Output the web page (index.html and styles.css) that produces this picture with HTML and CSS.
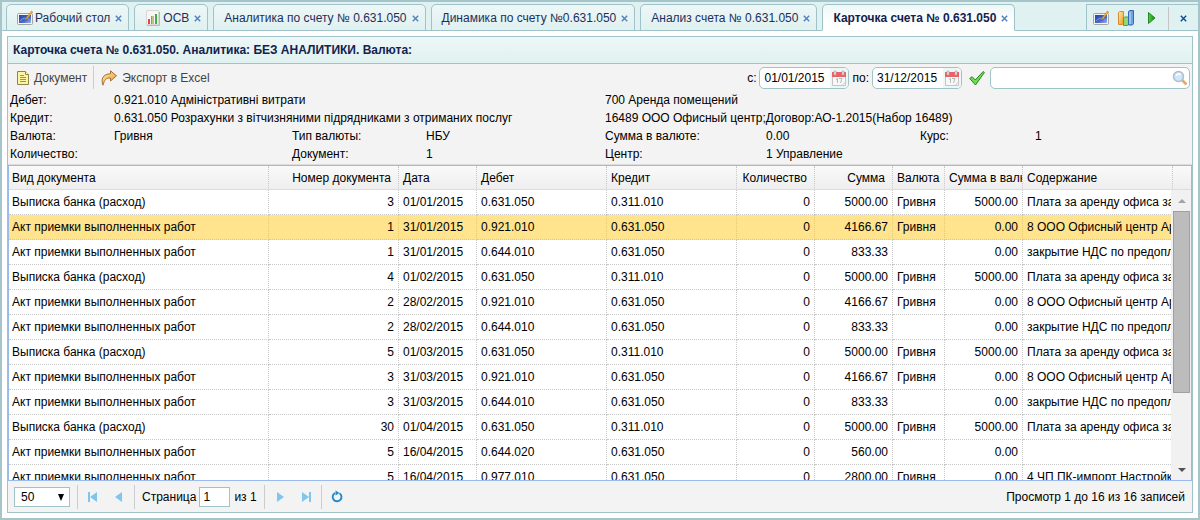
FILE: index.html
```html
<!DOCTYPE html>
<html lang="ru">
<head>
<meta charset="utf-8">
<title>Карточка счета № 0.631.050</title>
<link rel="stylesheet" href="styles.css">
</head>
<body>
<svg class="defs" aria-hidden="true">
  <defs>
    <linearGradient id="screen" x1="0" y1="0" x2="1" y2="1"><stop offset="0" stop-color="#2444a4"/><stop offset="0.6" stop-color="#4a68c4"/><stop offset="1" stop-color="#a4b8f0"/></linearGradient>
    <linearGradient id="green" x1="0" y1="0" x2="1" y2="0"><stop offset="0" stop-color="#5ccc50"/><stop offset="1" stop-color="#128a12"/></linearGradient>
    <linearGradient id="orange" x1="0" y1="0" x2="1" y2="1"><stop offset="0" stop-color="#fff0a0"/><stop offset="1" stop-color="#f0922c"/></linearGradient>
    <symbol id="desk" viewBox="0 0 16 16"><rect x="0.5" y="3.5" width="15" height="11" rx="1" fill="#f4f4f4" stroke="#a4a4a4"/><rect x="2" y="5" width="12" height="8" fill="url(#screen)"/><path d="M3 11q4-5 10-1" stroke="#7c98e4" fill="none"/><path d="M8.500 9.500l1-2L14.500 1l1.200 1-5.400 6.600z" fill="#f8bc44" stroke="#b87820" stroke-width=".6"/></symbol>
    <symbol id="close" viewBox="0 0 7 7"><path d="M.8.800l5.400 5.400M6.200.800L.8 6.200" stroke="currentColor" stroke-width="1.400"/></symbol>
    <symbol id="cal" viewBox="0 0 16 16"><path d="M1.500 4.500h13v11h-13z" fill="#f8f8f8" stroke="#c8c4c4"/><path d="M1 2h14v5H1z" fill="#e86464"/><path d="M3 1h2v4H3zM11 1h2v4h-2z" fill="#f0e4e4" stroke="#b89c9c" stroke-width=".6"/><path d="M5 9.500l1.500-1V13M8 8.500h3L9.500 13" fill="none" stroke="#b8b8b8"/><path d="M11 15.500l4-4" stroke="#ccc"/></symbol>
  </defs>
</svg>
<div class="window">
  <nav class="tabbar">
    <div class="tab"><svg class="icon"><use href="#desk"/></svg><a href="#">Рабочий стол</a><button class="tab-close" aria-label="Закрыть"><svg><use href="#close"/></svg></button></div>
    <div class="tab"><svg class="icon" viewBox="0 0 16 16"><path d="M1.500.500h12v14h-12z" fill="#f6f6f6" stroke="#d8d8d8"/><path d="M2 15.500h12.500V2" fill="none" stroke="#b8b8b8"/><path d="M3 9h2v5H3z" fill="#e84838"/><path d="M6 6h1.500v8H6z" fill="#38b4d8"/><path d="M7.500 6H9v8H7.500z" fill="#f0b434"/><path d="M10 4h2v10h-2z" fill="#34b83c"/></svg><a href="#">ОСВ</a><button class="tab-close" aria-label="Закрыть"><svg><use href="#close"/></svg></button></div>
    <div class="tab"><a href="#">Аналитика по счету № 0.631.050</a><button class="tab-close" aria-label="Закрыть"><svg><use href="#close"/></svg></button></div>
    <div class="tab"><a href="#">Динамика по счету №0.631.050</a><button class="tab-close" aria-label="Закрыть"><svg><use href="#close"/></svg></button></div>
    <div class="tab"><a href="#">Анализ счета № 0.631.050</a><button class="tab-close" aria-label="Закрыть"><svg><use href="#close"/></svg></button></div>
    <div class="tab active"><a href="#">Карточка счета № 0.631.050</a><button class="tab-close" aria-label="Закрыть"><svg><use href="#close"/></svg></button></div>
    <div class="tools">
      <button aria-label="Рабочий стол"><svg class="icon"><use href="#desk"/></svg></button>
      <button aria-label="Отчеты"><svg class="icon" viewBox="0 0 16 16"><path d="M.5 2.500l1-1h4v12l-1 1h-4z" fill="url(#orange)" stroke="#d88c30"/><path d="M5.500 8l1-1h4v7l-1 1.500h-4z" fill="#8cdc70" stroke="#48a438"/><path d="M10.500 1.500l1-1h4v13l-1 1.500h-4z" fill="#6ca4e8" stroke="#3468b0"/><path d="M12 2v12" stroke="#c8e0fc"/></svg></button>
      <button aria-label="Запуск"><svg class="icon" viewBox="0 0 16 16"><path d="M5.500 2.500v11L12 8z" fill="url(#green)" stroke="#1c8c1c"/></svg></button>
      <button class="close-all" aria-label="Закрыть все"><svg><use href="#close"/></svg></button>
    </div>
  </nav>
  <main class="panel">
    <h1 class="panel-title">Карточка счета № 0.631.050. Аналитика: БЕЗ АНАЛИТИКИ. Валюта:</h1>
    <div class="toolbar">
      <button class="command"><svg class="icon" viewBox="0 0 16 16"><path d="M2.500 1.500h8l3 3v10h-11z" fill="#fcf4a0" stroke="#8c8450"/><path d="M10.500 1.500v3h3" fill="#fff" stroke="#8c8450"/><path d="M5 5.500h4M5 7.500h6M5 9.500h6M5 11.500h6" stroke="#a09448"/></svg>Документ</button>
      <button class="command export"><svg class="icon" viewBox="0 0 16 16"><path d="M9.500.800l6 5-6 5.200V8C5 7.800 3.500 9.500 2 15.200 0 10 1 4 9.500 3.800z" fill="url(#orange)" stroke="#a07038"/></svg>Экспорт в Excel</button>
      <div class="filters">
        <label for="from">с:</label>
        <span class="date"><input id="from" type="text" value="01/01/2015"><button aria-label="Календарь"><svg class="icon"><use href="#cal"/></svg></button></span>
        <label for="to">по:</label>
        <span class="date"><input id="to" type="text" value="31/12/2015"><button aria-label="Календарь"><svg class="icon"><use href="#cal"/></svg></button></span>
        <button class="apply" aria-label="Применить"><svg class="icon" viewBox="0 0 16 16"><path d="M.7 8.500l2.500-1.800 3 3.300 8-8.500 1.200 1L6.500 15z" fill="#6cdc4c" stroke="#2c8424"/></svg></button>
        <span class="search"><input type="text" aria-label="Поиск"><button aria-label="Найти"><svg class="icon" viewBox="0 0 16 16"><path d="M10 10l4.500 4.500" stroke="#e8a860" stroke-width="2.600"/><circle cx="6.500" cy="6.500" r="5" fill="#cce8fc" stroke="#b0bccc" stroke-width="1.500"/><path d="M4 5.500q2-2.500 5-1" stroke="#fff" stroke-width="1.500" fill="none"/></svg></button></span>
      </div>
    </div>
    <dl class="details">
      <dt>Дебет:</dt><dd class="wide">0.921.010 Адміністративні витрати</dd><dd class="rest">700 Аренда помещений</dd>
      <dt>Кредит:</dt><dd class="wide">0.631.050 Розрахунки з вітчизняними підрядниками з отриманих послуг</dd><dd class="rest">16489 ООО Офисный центр;Договор:АО-1.2015(Набор 16489)</dd>
      <dt>Валюта:</dt><dd>Гривня</dd><dt>Тип валюты:</dt><dd>НБУ</dd><dt>Сумма в валюте:</dt><dd>0.00</dd><dt>Курс:</dt><dd>1</dd>
      <dt>Количество:</dt><dd></dd><dt>Документ:</dt><dd>1</dd><dt>Центр:</dt><dd>1 Управление</dd>
    </dl>
    <section class="grid">
      <table class="head">
        <colgroup><col class="c-kind"><col class="c-num"><col class="c-s"><col class="c-num"><col class="c-num"><col class="c-s"><col class="c-s"><col class="c-cur"><col class="c-s"><col><col class="c-spare"></colgroup>
        <thead><tr><th>Вид документа</th><th class="r">Номер документа</th><th>Дата</th><th>Дебет</th><th>Кредит</th><th class="r">Количество</th><th class="r">Сумма</th><th>Валюта</th><th>Сумма в валюте</th><th>Содержание</th><th></th></tr></thead>
      </table>
      <div class="body">
        <div class="rows">
          <table>
            <colgroup><col class="c-kind"><col class="c-num"><col class="c-s"><col class="c-num"><col class="c-num"><col class="c-s"><col class="c-s"><col class="c-cur"><col class="c-s"><col></colgroup>
            <tbody>
            <tr><td>Выписка банка (расход)</td><td class="r">3</td><td>01/01/2015</td><td>0.631.050</td><td>0.311.010</td><td class="r">0</td><td class="r">5000.00</td><td>Гривня</td><td class="r">5000.00</td><td>Плата за аренду офиса за</td></tr>
            <tr class="selected"><td>Акт приемки выполненных работ</td><td class="r">1</td><td>31/01/2015</td><td>0.921.010</td><td>0.631.050</td><td class="r">0</td><td class="r">4166.67</td><td>Гривня</td><td class="r">0.00</td><td>8 ООО Офисный центр Аренда</td></tr>
            <tr><td>Акт приемки выполненных работ</td><td class="r">1</td><td>31/01/2015</td><td>0.644.010</td><td>0.631.050</td><td class="r">0</td><td class="r">833.33</td><td></td><td class="r">0.00</td><td>закрытие НДС по предоплате</td></tr>
            <tr><td>Выписка банка (расход)</td><td class="r">4</td><td>01/02/2015</td><td>0.631.050</td><td>0.311.010</td><td class="r">0</td><td class="r">5000.00</td><td>Гривня</td><td class="r">5000.00</td><td>Плата за аренду офиса за</td></tr>
            <tr><td>Акт приемки выполненных работ</td><td class="r">2</td><td>28/02/2015</td><td>0.921.010</td><td>0.631.050</td><td class="r">0</td><td class="r">4166.67</td><td>Гривня</td><td class="r">0.00</td><td>8 ООО Офисный центр Аренда</td></tr>
            <tr><td>Акт приемки выполненных работ</td><td class="r">2</td><td>28/02/2015</td><td>0.644.010</td><td>0.631.050</td><td class="r">0</td><td class="r">833.33</td><td></td><td class="r">0.00</td><td>закрытие НДС по предоплате</td></tr>
            <tr><td>Выписка банка (расход)</td><td class="r">5</td><td>01/03/2015</td><td>0.631.050</td><td>0.311.010</td><td class="r">0</td><td class="r">5000.00</td><td>Гривня</td><td class="r">5000.00</td><td>Плата за аренду офиса за</td></tr>
            <tr><td>Акт приемки выполненных работ</td><td class="r">3</td><td>31/03/2015</td><td>0.921.010</td><td>0.631.050</td><td class="r">0</td><td class="r">4166.67</td><td>Гривня</td><td class="r">0.00</td><td>8 ООО Офисный центр Аренда</td></tr>
            <tr><td>Акт приемки выполненных работ</td><td class="r">3</td><td>31/03/2015</td><td>0.644.010</td><td>0.631.050</td><td class="r">0</td><td class="r">833.33</td><td></td><td class="r">0.00</td><td>закрытие НДС по предоплате</td></tr>
            <tr><td>Выписка банка (расход)</td><td class="r">30</td><td>01/04/2015</td><td>0.631.050</td><td>0.311.010</td><td class="r">0</td><td class="r">5000.00</td><td>Гривня</td><td class="r">5000.00</td><td>Плата за аренду офиса за</td></tr>
            <tr><td>Акт приемки выполненных работ</td><td class="r">5</td><td>16/04/2015</td><td>0.644.020</td><td>0.631.050</td><td class="r">0</td><td class="r">560.00</td><td></td><td class="r">0.00</td><td></td></tr>
            <tr><td>Акт приемки выполненных работ</td><td class="r">5</td><td>16/04/2015</td><td>0.977.010</td><td>0.631.050</td><td class="r">0</td><td class="r">2800.00</td><td>Гривня</td><td class="r">0.00</td><td>4 ЧП ПК-импорт Настройка</td></tr>
            </tbody>
          </table>
        </div>
        <div class="scrollbar" aria-hidden="true">
          <svg class="arrow" viewBox="0 0 8 4"><path d="M0 4l4-4 4 4z" fill="#a3a3a3"/></svg>
          <div class="track"><div class="thumb"></div></div>
          <svg class="arrow" viewBox="0 0 8 4"><path d="M0 0h8L4 4z" fill="#505050"/></svg>
        </div>
      </div>
    </section>
    <footer class="pager">
      <span class="size"><select aria-label="Записей на странице"><option>50</option></select><svg viewBox="0 0 6 7"><path d="M0 0h6L3 7z" fill="#000"/></svg></span>
      <i class="sep"></i>
      <button aria-label="Первая"><svg class="icon" viewBox="0 0 16 16"><path d="M3 3h2v10H3zM12 3v10L5 8z"/></svg></button>
      <button aria-label="Предыдущая"><svg class="icon" viewBox="0 0 16 16"><path d="M11 3v10L4 8z"/></svg></button>
      <i class="sep"></i>
      <label class="page">Страница<input type="text" value="1"></label><span class="total">из 1</span>
      <i class="sep"></i>
      <button aria-label="Следующая"><svg class="icon" viewBox="0 0 16 16"><path d="M5 3v10l7-5z"/></svg></button>
      <button aria-label="Последняя"><svg class="icon" viewBox="0 0 16 16"><path d="M4 3v10l7-5zM11 3h2v10h-2z"/></svg></button>
      <i class="sep"></i>
      <button class="reload" aria-label="Обновить"><svg class="icon" viewBox="0 0 16 16"><path d="M10.500 4.200A4.400 4.400 0 1 1 6 4" fill="none" stroke="#2488d0" stroke-width="1.900"/><path d="M6.500 1.500l4 2.500-4 2.500z" fill="#2488d0"/></svg></button>
      <span class="summary">Просмотр 1 до 16 из 16 записей</span>
    </footer>
  </main>
</div>
</body>
</html>
```

FILE: styles.css
```css
* { box-sizing: border-box; }
body { margin: 0; color: #000; }
body, button, input, select { font: 12px/18px "Liberation Sans", Arial, sans-serif; }
button { display: flex; align-items: center; padding: 0; border: 0; background: none; color: inherit; }
svg { display: block; flex: none; }
.defs { position: absolute; width: 0; height: 0; }
.icon { width: 16px; height: 16px; }
.window { display: flex; flex-direction: column; height: 100vh; border: 2px solid #a5c5ca; background: #fff; }

.tabbar { display: flex; flex: none; gap: 5px; height: 29px; padding: 2px 0 0 4px; background: #dff1f0; box-shadow: inset 0 -1px #9fc3c8; }
.tab { display: flex; align-items: center; padding: 0 6px 0 10px; border: 1px solid #9fc3c8; border-radius: 5px 5px 0 0; background: linear-gradient(#eef7f7, #dff1f0); color: #1c2f5c; white-space: nowrap; }
.tab a { color: inherit; text-decoration: none; }
.tab .icon { margin-right: 2px; }
.tab-close { margin-left: 5px; padding-top: 2px; color: #5180bc; }
.tab-close svg, .close-all svg { width: 7px; height: 7px; }
.active { border-bottom-color: #fff; background: linear-gradient(#eef7f7, #fff 70%); color: #12224e; font-weight: bold; }
.tools { display: flex; align-items: center; gap: 9px; margin-left: auto; padding: 0 11px 0 6px; border: 1px solid #9fc3c8; border-right: 0; }
.close-all { align-self: stretch; margin-top: 2px; padding-left: 11px; border-left: 1px solid #c4c4c4; color: #0c4c94; }

.panel { display: flex; flex: 1; flex-direction: column; min-height: 0; margin: 5px; border: 1px solid #9fc3c8; background: #f3f3f3; }
.panel-title { flex: none; margin: 0; padding: 4px 5px; border-bottom: 1px solid #9fc3c8; background: linear-gradient(#eef7f7, #dff1f0); color: #12224e; font-size: 12px; line-height: 18px; font-weight: bold; }
.toolbar { display: flex; flex: none; align-items: center; height: 27px; padding-left: 7px; }
.command { height: 23px; gap: 3px; padding-right: 6px; border-right: 1px solid #ccc; color: #444; }
.export { gap: 5px; padding-left: 7px; border: 0; }
.filters { display: flex; flex: 1; align-items: center; justify-content: flex-end; gap: 3px; padding-right: 2px; }
.date, .search { display: flex; align-items: center; height: 22px; border: 1px solid #9fc3c8; border-radius: 5px; background: #fff; overflow: hidden; }
.date { width: 90px; }
.date input, .search input { flex: 1; min-width: 0; padding: 0 0 0 4px; border: 0; background: none; }
.date button { align-self: stretch; padding: 0 1px; background: #eef7f7; }
.apply { padding: 0 2px 0 4px; }
.search { width: 200px; padding-right: 1px; }

.details { display: grid; flex: none; grid-template-columns: 104px 178px 134px 179px 161px 154px 115px 1fr; grid-auto-rows: 18px; margin: 0; padding: 0 0 2px 2px; white-space: nowrap; }
.details dd { margin: 0; }
.details .wide { grid-column: span 3; }
.details .rest { grid-column: span 4; }

.grid { display: flex; flex: 1; flex-direction: column; min-height: 0; border: 1px solid #99bbe8; border-bottom-color: #99bbf0; box-shadow: 0 -1px #ddd; background: #fff; }
table { width: 100%; border-spacing: 0; table-layout: fixed; }
.c-kind { width: 260px; }
.c-num { width: 130px; }
.c-s { width: 78px; }
.c-cur { width: 52px; }
.c-spare { width: 18px; }
th, td { height: 25px; padding: 0 4px; border: 0 dotted #c8c8c8; border-width: 0 1px 1px 0; font-weight: normal; text-align: left; white-space: nowrap; overflow: hidden; }
th:first-child, td:first-child { padding-left: 3px; }
.head { flex: none; }
.head th { height: 24px; padding-right: 0; border-bottom: 1px solid #ddd; background: linear-gradient(#fafafa, #eee); }
.head th:last-child { border-right: 0; }
.head .r { padding-right: 7px; }
.r { text-align: right; }
.rows td:last-child { padding-right: 0; border-right: 0; }
.selected td { background: #ffe48d; }
.body { display: flex; flex: 1; min-height: 0; overflow: hidden; }
.rows { flex: 1; overflow: hidden; }
.scrollbar { display: flex; flex: none; flex-direction: column; align-items: center; gap: 8px; width: 20px; padding: 9px 1px 8px 2px; background: #f1f1f1; }
.arrow { width: 8px; height: 4px; }
.track { flex: 1; width: 17px; }
.thumb { height: 73%; border: 1px solid #a0a0a0; background: #bcbcbc; }

.pager { display: flex; flex: none; align-items: center; height: 31px; padding: 0 7px 0 6px; white-space: nowrap; }
.size { position: relative; }
.size select { display: block; appearance: none; width: 56px; height: 20px; padding: 0 6px; border: 1px solid #9fc3c8; border-radius: 0; background: #fff; }
.size svg { position: absolute; top: 7px; right: 6px; width: 6px; height: 7px; pointer-events: none; }
.sep { width: 1px; height: 24px; margin: 0 7px; background: #ccc; }
.pager button { fill: #82c4f0; }
.pager button + button { margin-left: 10px; }
.page { display: flex; align-items: center; gap: 3px; }
.page input { width: 31px; height: 20px; padding: 0 3px; border: 1px solid #9fc3c8; }
.total { margin-left: 4px; }
.reload { margin-left: 0; }
.summary { margin-left: auto; }
```
